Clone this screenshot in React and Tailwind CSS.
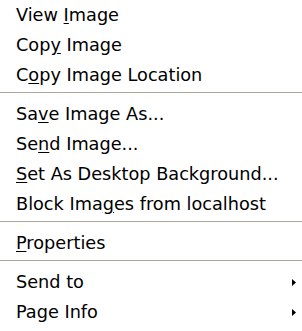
const groups = [
  [
    { pre: 'View ', key: 'I', post: 'mage' },
    { pre: 'Cop', key: 'y', post: ' Image' },
    { pre: 'C', key: 'o', post: 'py Image Location' },
  ],
  [
    { pre: 'Sa', key: 'v', post: 'e Image As...' },
    { pre: 'Se', key: 'n', post: 'd Image...' },
    { pre: '', key: 'S', post: 'et As Desktop Background...' },
    { pre: 'Block Ima', key: 'g', post: 'es from localhost' },
  ],
  [{ pre: '', key: 'P', post: 'roperties' }],
  [
    { pre: 'Send to', key: '', post: '', sub: true },
    { pre: 'Page Info', key: '', post: '', sub: true },
  ],
];

function Item({ item }) {
  return (
    <div className="flex h-[30px] items-center justify-between pl-4 pr-[6px]">
      <span className="whitespace-nowrap">
        {item.pre}
        {item.key && <span className="underline underline-offset-2">{item.key}</span>}
        {item.post}
      </span>
      {item.sub && (
        <svg width="4" height="7" viewBox="0 0 4 7">
          <path d="M0 0 L4 3.5 L0 7 Z" fill="#000" />
        </svg>
      )}
    </div>
  );
}

export default function App() {
  return (
    <div
      className="flex h-[331px] w-[302px] flex-col bg-white text-[17.7px] text-black"
      style={{ fontFamily: '"DejaVu Sans", sans-serif' }}
    >
      {groups.map((g, i) => (
        <div key={i}>
          {i > 0 && <div className="mb-[6px] mt-[2px] h-px bg-[#aca899]" />}
          {g.map((item) => (
            <Item key={item.pre + item.post} item={item} />
          ))}
        </div>
      ))}
    </div>
  );
}
